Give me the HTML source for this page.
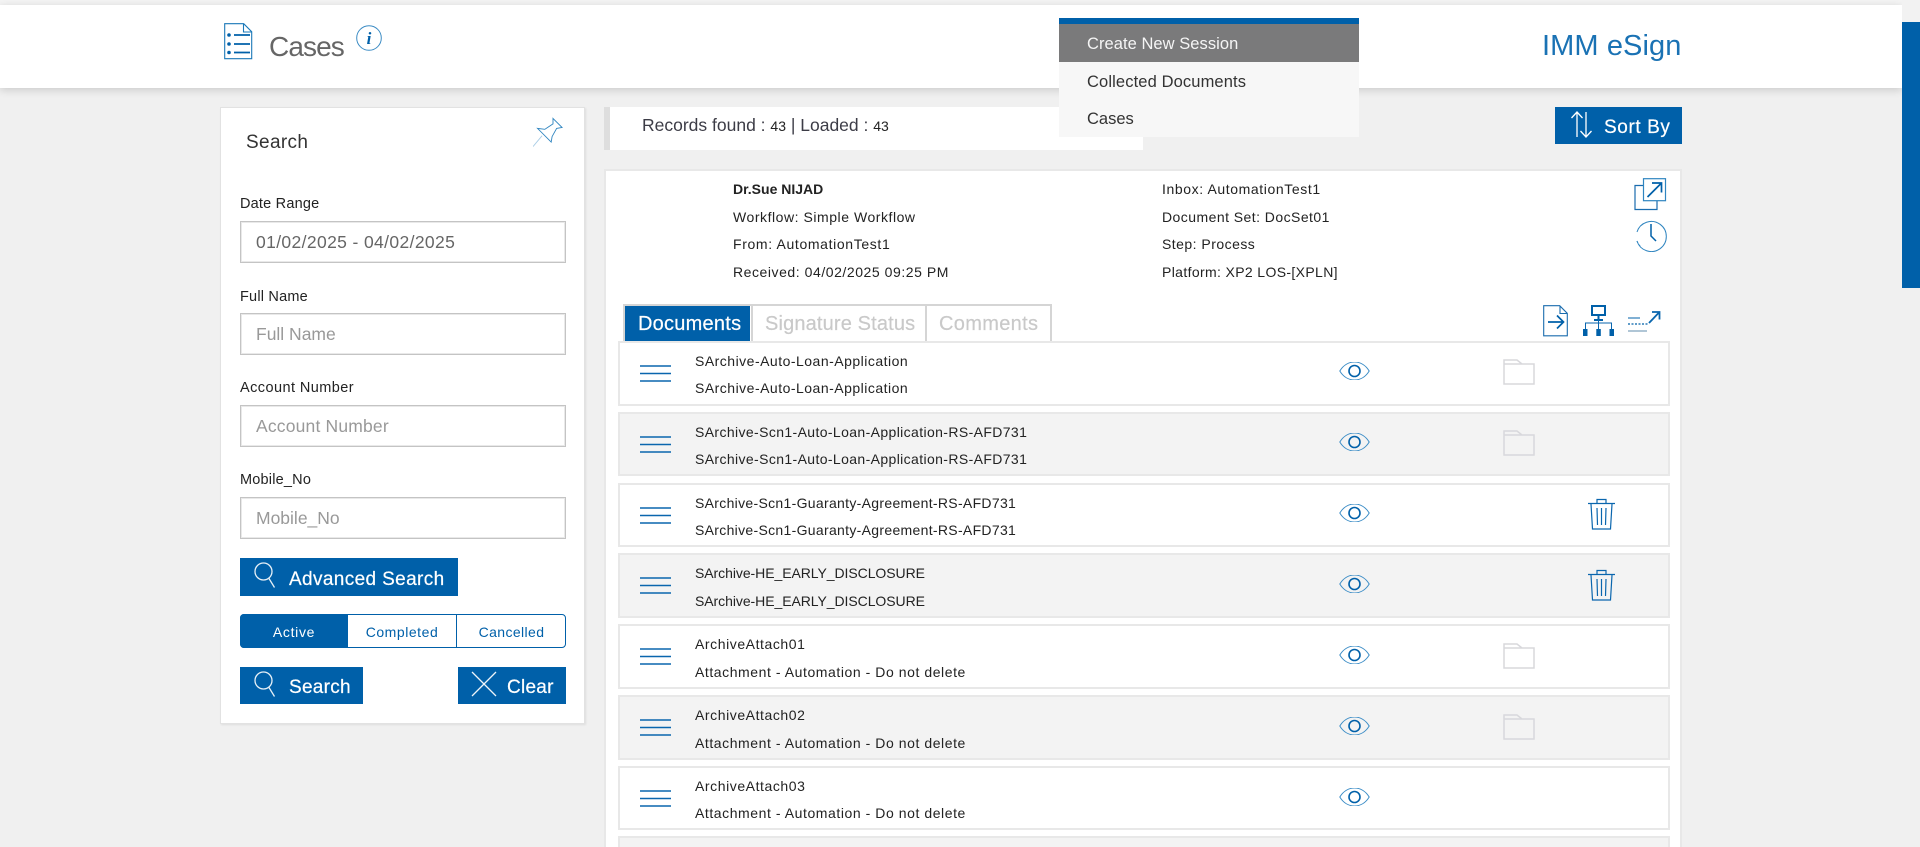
<!DOCTYPE html>
<html><head><meta charset="utf-8"><title>Cases</title>
<style>
*{box-sizing:border-box}
html,body{margin:0;padding:0;width:1920px;height:847px;overflow:hidden;background:#f0f0f0;font-family:"Liberation Sans",sans-serif;color:#222}
#w{position:relative;width:1920px;height:847px;overflow:hidden;background:#f0f0f0}
.a{position:absolute}
.t{position:absolute;white-space:nowrap;line-height:20px}
.row{position:absolute;left:618px;width:1052px;border:2px solid #e8e8e8;height:65px}
.row.g{background:#f3f3f3}.row.w{background:#fff}
.row .t{font-size:14px;left:75px;color:#222}
.row .l1{top:8px}.row .l2{top:36px}.row .u{top:35px}
.row svg{position:absolute}
.inp{position:absolute;left:240px;width:326px;height:42px;border:1px solid #c4c4c4;box-shadow:inset 0 0 0 1px #e9e9e9;background:#fff;font-size:17.5px;line-height:40px;padding-left:15px;color:#999}
.lbl{position:absolute;left:240px;font-size:14.5px;line-height:20px;color:#222;white-space:nowrap;letter-spacing:.2px}
.btn{position:absolute;background:#0060a9;color:#fff}
.btn .t{font-size:19px;-webkit-text-stroke:.2px #fff}
.i{font-size:14px}
</style></head><body><div id="w">
<svg width="0" height="0" style="position:absolute">
<symbol id="eye" viewBox="0 0 31 18"><path d="M.8 9C8-3 23-3 30.2 9 23 21 8 21 .8 9Z" fill="none" stroke="#3a8cc6" stroke-width="1"/><circle cx="15.5" cy="9" r="5.5" fill="none" stroke="#0060a9" stroke-width="1.6"/></symbol>
<symbol id="ham" viewBox="0 0 31 17"><path d="M0 1h31M0 8.5h31M0 16h31" stroke="#0a66ae" stroke-width="1.6"/></symbol>
<symbol id="fol" viewBox="0 0 32 26"><path d="M1 25V1h13l5 4h12v20ZM1 5h18" fill="none" stroke="#d8d8dc" stroke-width="1.5"/></symbol>
<symbol id="tra" viewBox="0 0 27 32"><path d="M0 5.5h27M9 5V1.5h9V5M3 6l1.500 25h18L24 6M9 10l.5 17M13.500 10v17M18 10l-.5 17" fill="none" stroke="#0a66ae" stroke-width="1.2"/></symbol>
<symbol id="mag" viewBox="0 0 22 27"><circle cx="9.500" cy="9.500" r="8.500" fill="none" stroke="#e6f0f7" stroke-width="1.3"/><path d="M15 16.500l5.500 9" stroke="#e6f0f7" stroke-width="1.300"/></symbol>
</svg>

<div class="a" style="left:0;top:0;width:1920px;height:5px;background:#f4f4f4"></div>
<div class="a" style="left:0;top:5px;width:1902px;height:83px;background:#fff;box-shadow:0 2px 8px rgba(0,0,0,.16)"></div>
<div class="a" style="left:1902px;top:0;width:18px;height:88px;background:#f2f2f2"></div>
<div class="a" style="left:1902px;top:22px;width:18px;height:266px;background:#0060a9"></div>

<svg class="a" style="left:224px;top:23px" width="29" height="37" viewBox="0 0 29 37" fill="none"><path d="M.7.7h19l8 8v27H.7ZM19.500 1v8h8" stroke="#1a78b8" stroke-width="1.100"/><path d="M10 12h16M10 21h16M10 29.500h16" stroke="#0060a9" stroke-width="1.700"/><circle cx="5" cy="12" r="1.800" fill="#0060a9"/><circle cx="5" cy="21" r="1.800" fill="#0060a9"/><circle cx="5" cy="29.500" r="1.800" fill="#0060a9"/></svg>
<div class="t" style="left:269px;top:31px;font-size:28px;line-height:32px;color:#666;letter-spacing:-.9px">Cases</div>
<svg class="a" style="left:356px;top:25px" width="26" height="26" viewBox="0 0 26 26"><circle cx="13" cy="13" r="12.300" fill="none" stroke="#3c8cc4" stroke-width="1"/><text x="13" y="19" font-family="Liberation Serif,serif" font-size="17" font-weight="bold" font-style="italic" fill="#0060a9" text-anchor="middle">i</text></svg>

<div class="t" style="left:1542px;top:29px;font-size:29px;line-height:34px;color:#1a72b4;letter-spacing:.1px">IMM eSign</div>

<div class="a" style="left:604px;top:107px;width:6px;height:43px;background:#dedede"></div>
<div class="a" style="left:610px;top:107px;width:533px;height:43px;background:#fff"></div>
<div class="t" style="left:642px;top:115px;font-size:17.500px;color:#3c3c46">Records found : <span style="font-size:14px;color:#222">43</span> | Loaded : <span style="font-size:14px;color:#222">43</span></div>

<div class="a" style="left:1059px;top:18px;width:300px;height:119px;background:#f7f7f7"></div>
<div class="a" style="left:1059px;top:18px;width:300px;height:6px;background:#0060a9"></div>
<div class="a" style="left:1059px;top:24px;width:300px;height:38px;background:#7a7a7b"></div>
<div class="t" style="left:1087px;top:34px;font-size:16.500px;color:#f5f5f5;letter-spacing:.05px">Create New Session</div>
<div class="t" style="left:1087px;top:72px;font-size:16.500px;color:#333;letter-spacing:.12px">Collected Documents</div>
<div class="t" style="left:1087px;top:109px;font-size:16.500px;color:#333">Cases</div>

<div class="btn" style="left:1555px;top:107px;width:127px;height:37px"></div>
<svg class="a" style="left:1570px;top:111px" width="23" height="27" viewBox="0 0 23 27" fill="none" stroke="#fff" stroke-width="1.300"><path d="M7 26V1M1.500 7L7 1l5.500 6M16 1v25M10.500 20l5.500 6 5.500-6"/></svg>
<div class="t" style="left:1604px;top:118px;font-size:19px;color:#fff;-webkit-text-stroke:.2px #fff;letter-spacing:.6px">Sort By</div>

<!-- Search panel -->
<div class="a" style="left:220px;top:107px;width:365px;height:617px;background:#fff;border:1px solid #e2e2e2;box-shadow:1px 1px 2px rgba(0,0,0,.08)"></div>
<div class="t" style="left:246px;top:133px;font-size:19px;color:#333;letter-spacing:.35px">Search</div>
<svg class="a" style="left:533px;top:117px" width="30" height="31" viewBox="0 0 33 33" fill="none"><path d="M22 1L32 11 26 12 21 21 20 27 5 12 13 13 22 7Z" stroke="#2f85c0" stroke-width="1"/><path d="M10 20L0 32" stroke="#a9cde6" stroke-width="1"/></svg>

<div class="lbl" style="top:194px">Date Range</div>
<div class="inp" style="top:221px;color:#666;letter-spacing:.37px">01/02/2025 - 04/02/2025</div>
<div class="lbl" style="top:287px">Full Name</div>
<div class="inp" style="top:313px">Full Name</div>
<div class="lbl" style="top:378px;letter-spacing:.43px">Account Number</div>
<div class="inp" style="top:405px;letter-spacing:.18px">Account Number</div>
<div class="lbl" style="top:470px">Mobile_No</div>
<div class="inp" style="top:497px">Mobile_No</div>

<div class="btn" style="left:240px;top:558px;width:218px;height:38px"><svg style="position:absolute;left:14px;top:4px" width="22" height="27"><use href="#mag"/></svg><div class="t" style="left:49px;top:12px;letter-spacing:.37px">Advanced Search</div></div>

<div class="a" style="left:240px;top:614px;width:326px;height:34px;border:1px solid #0060a9;border-radius:4px;background:#fff"></div>
<div class="a" style="left:240px;top:614px;width:108px;height:34px;background:#0060a9;border-radius:4px 0 0 4px"></div>
<div class="a" style="left:456px;top:614px;width:1px;height:34px;background:#0060a9"></div>
<div class="t" style="left:240px;width:108px;text-align:center;top:622px;font-size:14px;color:#fff;letter-spacing:.7px">Active</div>
<div class="t" style="left:348px;width:108px;text-align:center;top:622px;font-size:14px;color:#0060a9;letter-spacing:.54px">Completed</div>
<div class="t" style="left:457px;width:109px;text-align:center;top:622px;font-size:14px;color:#0060a9;letter-spacing:.4px">Cancelled</div>

<div class="btn" style="left:240px;top:667px;width:123px;height:37px"><svg style="position:absolute;left:14px;top:4px" width="22" height="27"><use href="#mag"/></svg><div class="t" style="left:49px;top:11px;letter-spacing:.28px">Search</div></div>
<div class="btn" style="left:458px;top:667px;width:108px;height:37px"><svg style="position:absolute;left:13px;top:4px" width="26" height="26" fill="none" stroke="#eef4f9" stroke-width="1.300"><path d="M1 1l24 24M25 1L1 25"/></svg><div class="t" style="left:49px;top:11px;letter-spacing:.25px">Clear</div></div>

<!-- Case panel -->
<div class="a" style="left:604px;top:169px;width:1078px;height:678px;background:#fff;border:2px solid #e8e8e8;border-bottom:0"></div>
<div class="t i" style="left:733px;top:179px;font-weight:bold">Dr.Sue NIJAD</div>
<div class="t i" style="left:733px;top:207px;letter-spacing:.54px">Workflow: Simple Workflow</div>
<div class="t i" style="left:733px;top:234px;letter-spacing:.64px">From: AutomationTest1</div>
<div class="t i" style="left:733px;top:262px;letter-spacing:.55px">Received: 04/02/2025 09:25 PM</div>
<div class="t i" style="left:1162px;top:179px;letter-spacing:.6px">Inbox: AutomationTest1</div>
<div class="t i" style="left:1162px;top:207px;letter-spacing:.45px">Document Set: DocSet01</div>
<div class="t i" style="left:1162px;top:234px;letter-spacing:.47px">Step: Process</div>
<div class="t i" style="left:1162px;top:262px;letter-spacing:.36px">Platform: XP2 LOS-[XPLN]</div>

<svg class="a" style="left:1634px;top:178px" width="33" height="33" viewBox="0 0 33 33" fill="none"><path d="M9.500 7.500H1v24h22V23" stroke="#1a6cae" stroke-width="1.200"/><rect x="9.500" y=".7" width="22" height="22" stroke="#2f85c0" stroke-width="1.200"/><path d="M13.500 19L27 5.500M18 5h9.500v9.500" stroke="#0060a9" stroke-width="1.700"/></svg>
<svg class="a" style="left:1634px;top:220px" width="33" height="32" viewBox="0 0 33 32" fill="none"><path d="M3 12A15 15 0 1 1 3 21" stroke="#2f85c0" stroke-width="1"/><path d="M3 21a15 15 0 0 0 4 6" stroke="#2f85c0" stroke-width="1" stroke-dasharray="2 2"/><path d="M17 4v12l5 5" stroke="#0060a9" stroke-width="1.500"/></svg>

<!-- tabs -->
<div class="a" style="left:623px;top:304px;width:429px;height:37px;border:2px solid #d5d5d5;border-bottom:0;background:#fff"></div>
<div class="a" style="left:625px;top:306px;width:125px;height:35px;background:#0060a9"></div>
<div class="a" style="left:751px;top:306px;width:2px;height:35px;background:#d5d5d5"></div>
<div class="a" style="left:925px;top:306px;width:2px;height:35px;background:#d5d5d5"></div>
<div class="t" style="left:638px;top:314px;font-size:20px;color:#fff;letter-spacing:.24px;-webkit-text-stroke:.2px #fff">Documents</div>
<div class="t" style="left:765px;top:314px;font-size:20px;color:#c9c9c9;letter-spacing:.15px;-webkit-text-stroke:.2px #c9c9c9">Signature Status</div>
<div class="t" style="left:939px;top:314px;font-size:20px;color:#c9c9c9;letter-spacing:.33px;-webkit-text-stroke:.2px #c9c9c9">Comments</div>

<svg class="a" style="left:1543px;top:305px" width="25" height="32" viewBox="0 0 25 32" fill="none"><path d="M.7.7h16l7.600 7.600v22.500H.7ZM17 1v7.500h7.500" stroke="#1a6cae" stroke-width="1.100"/><path d="M5 17h15M14 10.500L20.500 17 14 23.500" stroke="#0060a9" stroke-width="1.700"/></svg>
<svg class="a" style="left:1583px;top:305px" width="33" height="32" viewBox="0 0 33 32" fill="none"><rect x="9" y="1" width="13" height="9" stroke="#0060a9" stroke-width="2"/><path d="M15.500 11v3M11 15h9" stroke="#0060a9" stroke-width="2"/><path d="M2.500 24v-6h26v6M15.500 14v10" stroke="#0a66ae" stroke-width="1"/><rect x="0" y="24" width="4.500" height="7" fill="#0060a9"/><rect x="13.300" y="24" width="4.500" height="7" fill="#0060a9"/><rect x="26.500" y="24" width="4.500" height="7" fill="#0060a9"/></svg>
<svg class="a" style="left:1628px;top:310px" width="33" height="23" viewBox="0 0 33 23" fill="none"><path d="M0 8h12" stroke="#0060a9" stroke-width="1"/><path d="M0 14h20" stroke="#0060a9" stroke-width="1.300" stroke-dasharray="2 1.500"/><path d="M19 21H0" stroke="#b0c6d6" stroke-width="2"/><path d="M21 13L31 2.500M24 2h7.500v7.500" stroke="#0a66ae" stroke-width="1.800"/></svg>

<!-- rows -->
<div class="row w" style="top:341px"><svg style="left:20px;top:22px" width="31" height="17"><use href="#ham"/></svg><div class="t l1" style="letter-spacing:.49px">SArchive-Auto-Loan-Application</div><div class="t u" style="letter-spacing:.49px">SArchive-Auto-Loan-Application</div><svg style="left:719px;top:19px" width="31" height="18"><use href="#eye"/></svg><svg style="left:883px;top:16px" width="32" height="26"><use href="#fol"/></svg></div>
<div class="row g" style="top:412px;height:64px"><svg style="left:20px;top:22px" width="31" height="17"><use href="#ham"/></svg><div class="t l1" style="letter-spacing:.38px">SArchive-Scn1-Auto-Loan-Application-RS-AFD731</div><div class="t u" style="letter-spacing:.38px">SArchive-Scn1-Auto-Loan-Application-RS-AFD731</div><svg style="left:719px;top:19px" width="31" height="18"><use href="#eye"/></svg><svg style="left:883px;top:16px" width="32" height="26"><use href="#fol"/></svg></div>
<div class="row w" style="top:483px;height:64px"><svg style="left:20px;top:22px" width="31" height="17"><use href="#ham"/></svg><div class="t l1" style="letter-spacing:.31px">SArchive-Scn1-Guaranty-Agreement-RS-AFD731</div><div class="t u" style="letter-spacing:.31px">SArchive-Scn1-Guaranty-Agreement-RS-AFD731</div><svg style="left:719px;top:19px" width="31" height="18"><use href="#eye"/></svg><svg style="left:968px;top:13px" width="27" height="32"><use href="#tra"/></svg></div>
<div class="row g" style="top:553px;height:65px"><svg style="left:20px;top:22px" width="31" height="17"><use href="#ham"/></svg><div class="t l1" style="letter-spacing:-.06px">SArchive-HE_EARLY_DISCLOSURE</div><div class="t l2" style="letter-spacing:-.06px">SArchive-HE_EARLY_DISCLOSURE</div><svg style="left:719px;top:20px" width="31" height="18"><use href="#eye"/></svg><svg style="left:968px;top:14px" width="27" height="32"><use href="#tra"/></svg></div>
<div class="row w" style="top:624px;height:65px"><svg style="left:20px;top:22px" width="31" height="17"><use href="#ham"/></svg><div class="t l1" style="letter-spacing:.57px">ArchiveAttach01</div><div class="t l2" style="letter-spacing:.56px">Attachment - Automation - Do not delete</div><svg style="left:719px;top:20px" width="31" height="18"><use href="#eye"/></svg><svg style="left:883px;top:17px" width="32" height="26"><use href="#fol"/></svg></div>
<div class="row g" style="top:695px;height:65px"><svg style="left:20px;top:22px" width="31" height="17"><use href="#ham"/></svg><div class="t l1" style="letter-spacing:.57px">ArchiveAttach02</div><div class="t l2" style="letter-spacing:.56px">Attachment - Automation - Do not delete</div><svg style="left:719px;top:20px" width="31" height="18"><use href="#eye"/></svg><svg style="left:883px;top:17px" width="32" height="26"><use href="#fol"/></svg></div>
<div class="row w" style="top:766px;height:64px"><svg style="left:20px;top:22px" width="31" height="17"><use href="#ham"/></svg><div class="t l1" style="letter-spacing:.57px">ArchiveAttach03</div><div class="t u" style="letter-spacing:.56px">Attachment - Automation - Do not delete</div><svg style="left:719px;top:20px" width="31" height="18"><use href="#eye"/></svg></div>
<div class="row g" style="top:836px;height:11px;border-bottom:0"></div>
</div></body></html>
